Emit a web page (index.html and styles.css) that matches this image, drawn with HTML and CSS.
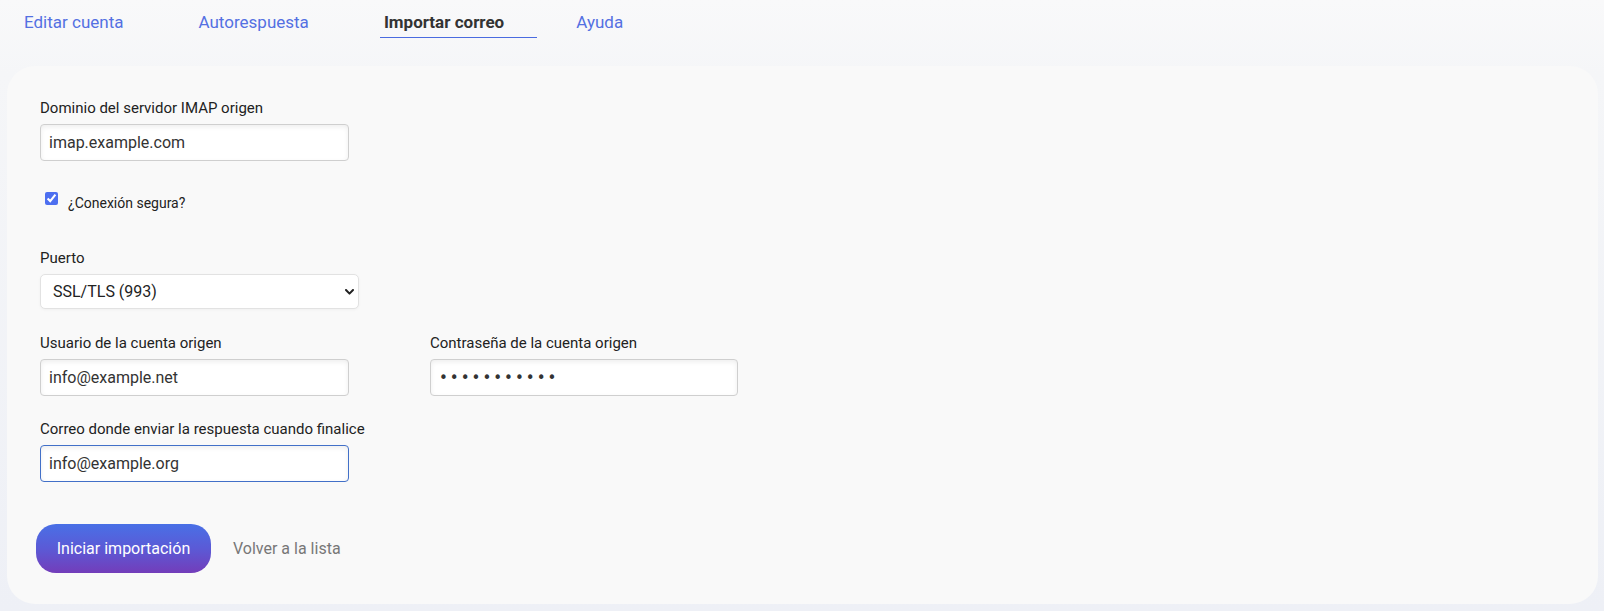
FILE: index.html
```html
<!DOCTYPE html>
<html lang="es">
<head>
    <meta charset="UTF-8">
    <meta name="viewport" content="width=device-width, initial-scale=1.0">
    <title>Importar correo</title>
    <link rel="stylesheet" href="styles.css">
</head>
<body>
    <!-- Tabs -->
    <nav class="tabs">
        <a href="#" class="tab">Editar cuenta</a>
        <a href="#" class="tab">Autorespuesta</a>
        <a href="#" class="tab active">Importar correo</a>
        <a href="#" class="tab">Ayuda</a>
    </nav>

    <div class="card">
        <form class="import-form">
            <div class="field">
                <label for="host">Dominio del servidor IMAP origen</label>
                <input type="text" id="host" class="input" value="imap.example.com">
            </div>

            <div class="check-row">
                <input type="checkbox" id="secure" checked>
                <label for="secure">¿Conexión segura?</label>
            </div>

            <div class="field field-port">
                <label for="port">Puerto</label>
                <div class="select-wrap">
                    <select id="port" class="select">
                        <option>SSL/TLS (993)</option>
                        <option>Sin cifrar (143)</option>
                    </select>
                    <svg class="chevron" width="9" height="6" viewBox="0 0 9 6">
                        <path d="M1 1 L4.5 4.6 L8 1" fill="none" stroke="#222" stroke-width="2" stroke-linecap="round" stroke-linejoin="round"/>
                    </svg>
                </div>
            </div>

            <div class="field-row">
                <div class="field">
                    <label for="user">Usuario de la cuenta origen</label>
                    <input type="text" id="user" class="input" value="info@example.net">
                </div>
                <div class="field">
                    <label for="pass">Contraseña de la cuenta origen</label>
                    <input type="password" id="pass" class="input input-pass" value="secretpass1">
                </div>
            </div>

            <div class="field">
                <label for="notify">Correo donde enviar la respuesta cuando finalice</label>
                <input type="text" id="notify" class="input is-focus" value="info@example.org">
            </div>

            <div class="actions">
                <button type="submit" class="btn-primary">Iniciar importación</button>
                <a href="#" class="link-back">Volver a la lista</a>
            </div>
        </form>
    </div>
</body>
</html>
```

FILE: styles.css
```css
html, body {
    height: 100%;
}

body {
    margin: 0;
    font-family: Roboto, "Liberation Sans", Arial, sans-serif;
    background: linear-gradient(180deg, #f9f9fa 0%, #f5f6f8 12%, #eef0f6 100%);
    color: #222;
}

.tabs {
    display: flex;
    align-items: flex-start;
    height: 66px;
    padding-left: 24px;
    box-sizing: border-box;
    padding-top: 12px;
}

.tab {
    font-size: 17px;
    line-height: 20px;
    color: #5470e2;
    text-decoration: none;
    margin-right: 75px;
    white-space: nowrap;
}

.active {
    color: #333;
    font-weight: 700;
    margin-left: -4px;
    padding: 0 33px 5px 4px;
    border-bottom: 1px solid #4a6be0;
    margin-right: 39px;
}

.card {
    margin: 0 6px 0 7px;
    height: 538px;
    box-sizing: border-box;
    background-color: #f9f9f9;
    border-radius: 28px;
    padding: 34px 33px 0;
}

.field {
    display: flex;
    flex-direction: column;
    width: 309px;
}

.field label {
    font-size: 15px;
    line-height: 16px;
    color: #222;
    margin-bottom: 8px;
    white-space: nowrap;
}

.input {
    box-sizing: border-box;
    height: 37px;
    width: 309px;
    padding: 0 8px;
    font-family: Roboto, "Liberation Sans", Arial, sans-serif;
    font-size: 16px;
    color: #333;
    background-color: #fff;
    border: 1px solid #cfcfcf;
    border-radius: 4px;
    box-shadow: inset 0 2px 5px rgba(0, 0, 0, 0.07);
    outline: none;
}

.input-pass {
    letter-spacing: 2px;
    font-family: "DejaVu Sans", sans-serif;
    font-size: 15px;
    color: #333;
}

.is-focus {
    border-color: #4270c8;
}

.check-row {
    display: flex;
    align-items: flex-start;
    margin-top: 31px;
    height: 18px;
}

.check-row input {
    width: 13px;
    height: 13px;
    margin: 0 10px 0 5px;
    accent-color: #4d6ff0;
}

.check-row label {
    font-size: 14px;
    line-height: 16px;
    margin-top: 3px;
}

.field-port {
    margin-top: 40px;
    width: 319px;
}

.select-wrap {
    position: relative;
    width: 319px;
}

.select {
    appearance: none;
    -webkit-appearance: none;
    box-sizing: border-box;
    width: 319px;
    height: 35px;
    padding: 0 12px;
    font-family: Roboto, "Liberation Sans", Arial, sans-serif;
    font-size: 16px;
    color: #222;
    background-color: #fff;
    border: 1px solid #e2e2e2;
    border-radius: 5px;
    box-shadow: 0 1px 3px rgba(0, 0, 0, 0.04);
    outline: none;
}

.chevron {
    position: absolute;
    right: 5px;
    top: 15px;
    pointer-events: none;
}

.field-row {
    display: flex;
    gap: 81px;
    margin-top: 26px;
}

.field-row .field {
    width: 309px;
}

.field-row .field:last-child .input {
    width: 308px;
}

.import-form > .field:nth-last-child(2) {
    margin-top: 25px;
}

.actions {
    display: flex;
    align-items: center;
    margin-top: 42px;
    margin-left: -4px;
}

.btn-primary {
    width: 175px;
    height: 49px;
    border: none;
    border-radius: 20px;
    background: linear-gradient(180deg, #4970e6 0%, #5b5ad6 50%, #733dba 100%);
    color: #fff;
    font-family: Roboto, "Liberation Sans", Arial, sans-serif;
    font-size: 16px;
    font-weight: 400;
    cursor: pointer;
}

.link-back {
    margin-left: 22px;
    font-size: 16px;
    color: #777;
    text-decoration: none;
}
```
